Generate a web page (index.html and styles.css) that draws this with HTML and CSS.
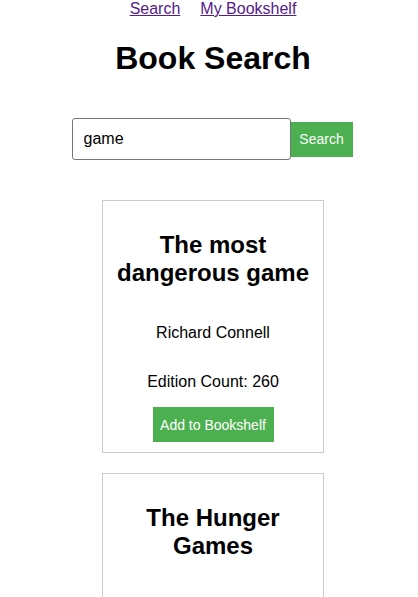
FILE: index.html
```html
<!DOCTYPE html>
<html lang="en">
<head>
<meta charset="utf-8">
<title>Book Search</title>
<link rel="stylesheet" href="styles.css">
</head>
<body>
<div class="app">
  <nav class="nav">
    <a href="#" class="nav-link">Search</a>
    <a href="#" class="nav-link">My Bookshelf</a>
  </nav>
  <h1 class="title">Book Search</h1>
  <form class="search-form">
    <input class="search-input" type="text" value="game">
    <button class="search-btn" type="button">Search</button>
  </form>
  <div class="results">
    <div class="card">
      <h2 class="card-title">The most dangerous game</h2>
      <p class="card-author">Richard Connell</p>
      <p class="card-count">Edition Count: 260</p>
      <button class="add-btn" type="button">Add to Bookshelf</button>
    </div>
    <div class="card">
      <h2 class="card-title">The Hunger Games</h2>
      <p class="card-author">Suzanne Collins</p>
      <p class="card-count">Edition Count: 92</p>
      <button class="add-btn" type="button">Add to Bookshelf</button>
    </div>
  </div>
</div>
</body>
</html>
```
FILE: styles.css
```css
html, body {
  margin: 0;
  padding: 0;
  background: #fff;
}
body {
  font-family: "Liberation Sans", Arial, sans-serif;
  color: #000;
}
.app {
  padding-left: 8px;
  text-align: center;
}
.nav {
  display: flex;
  justify-content: center;
  gap: 20px;
  font-size: 16px;
  line-height: 18px;
}
.nav-link {
  color: #551a8b;
  text-decoration: underline;
}
.title {
  font-size: 32px;
  font-weight: bold;
  margin: 22px 0 21px;
}
.search-form {
  display: flex;
  justify-content: center;
  align-items: center;
  margin: 0;
  padding-top: 20px;
  padding-right: 2px;
}
.search-input {
  box-sizing: border-box;
  width: 219px;
  height: 42px;
  padding: 0 11px;
  border: 1px solid #767676;
  border-radius: 3px;
  font-family: "Liberation Sans", Arial, sans-serif;
  font-size: 16px;
  color: #000;
  margin: 0;
}
.search-btn {
  box-sizing: border-box;
  height: 35px;
  width: 62px;
  padding: 0;
  background: #4caf50;
  color: #fff;
  border: none;
  font-family: "Liberation Sans", Arial, sans-serif;
  font-size: 14px;
  margin: 0;
}
.results {
  display: flex;
  flex-direction: column;
  align-items: center;
  gap: 20px;
  margin-top: 40px;
}
.card {
  box-sizing: border-box;
  width: 222px;
  padding: 10px;
  border: 1px solid #ccc;
}
.card-title {
  font-size: 24px;
  font-weight: bold;
  margin: 20px 0 0;
  line-height: 28px;
}
.card-author {
  font-size: 16px;
  margin: 37px 0 0;
  line-height: 18px;
}
.card-count {
  font-size: 16px;
  margin: 31px 0 0;
  line-height: 18px;
}
.add-btn {
  box-sizing: border-box;
  margin-top: 16px;
  height: 35px;
  width: 121px;
  padding: 0;
  background: #4caf50;
  color: #fff;
  border: none;
  font-family: "Liberation Sans", Arial, sans-serif;
  font-size: 14px;
}
```
